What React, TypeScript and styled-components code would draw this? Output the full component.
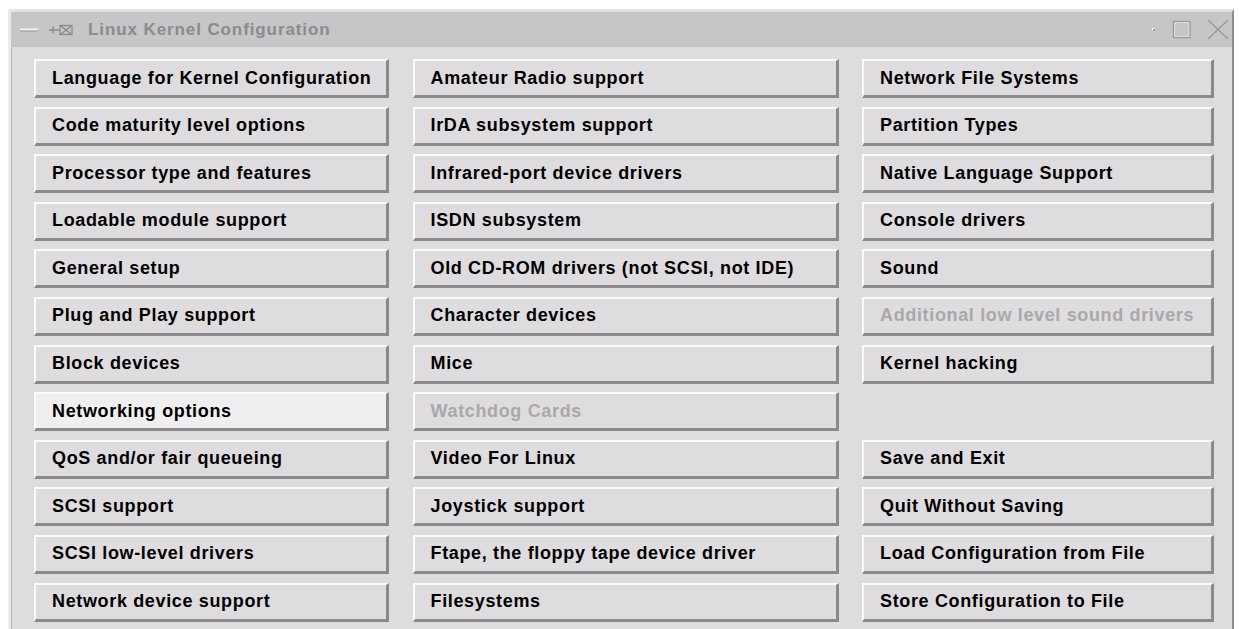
import { createGlobalStyle, styled } from "styled-components";

const GlobalStyle = createGlobalStyle`
    html, body {
        margin: 0;
        padding: 0;
        background: #ffffff;
        overflow: hidden;
    }
    body {
        font-family: "Liberation Sans", Arial, Helvetica, sans-serif;
    }
`;

const Page = styled.div`
    padding: 9px 0 0 8px;
    width: 1239px;
    height: 629px;
    box-sizing: border-box;
`;

const Window = styled.div`
    display: flex;
    flex-direction: column;
    width: 1226px;
    height: 640px;
    border-left: 3px solid #ebebed;
    border-top: 3px solid #e4e4e6;
    border-right: 2px solid #8e8e90;
    box-shadow: inset 1px 0 0 #b4b4b6;
    box-sizing: border-box;
    background: #dfdcdf;
`;

const TitleBar = styled.div`
    display: flex;
    align-items: center;
    height: 35px;
    padding: 0 2px 0 8px;
    background: #c6c5c8;
    color: #8a8a8c;
`;

const Title = styled.span`
    margin-left: 13px;
    font-size: 17px;
    font-weight: bold;
    letter-spacing: 0.9px;
    color: #8b8b8d;
`;

const Spacer = styled.div`
    flex: 1;
`;

const WinButtons = styled.div`
    display: flex;
    align-items: center;
    gap: 14px;

    svg:first-child {
        margin-right: 1px;
    }
`;

const Body = styled.div`
    display: grid;
    grid-template-columns: 355px 426px 352px;
    grid-template-rows: repeat(12, 39px);
    grid-auto-flow: column;
    column-gap: 23.5px;
    row-gap: 8.6px;
    padding: 12px 0 0 23px;
`;

const MenuButton = styled.div<{ $disabled?: boolean; $active?: boolean }>`
    display: flex;
    align-items: center;
    padding-left: 16px;
    box-sizing: border-box;
    border-style: solid;
    border-width: 2px 3px 3px 2px;
    border-color: #fbfbfb #8a898b #8a898b #fbfbfb;
    background: ${(p) => (p.$active ? "#f0efef" : "#dfdcdf")};
    color: ${(p) => (p.$disabled ? "#a9a8aa" : "#000000")};
    font-size: 18px;
    font-weight: bold;
    letter-spacing: 0.65px;
    white-space: nowrap;
`;

const Empty = styled.div``;

interface Item {
    label: string;
    disabled?: boolean;
    active?: boolean;
    empty?: boolean;
}

const items: Item[] = [
    { label: "Language for Kernel Configuration" },
    { label: "Code maturity level options" },
    { label: "Processor type and features" },
    { label: "Loadable module support" },
    { label: "General setup" },
    { label: "Plug and Play support" },
    { label: "Block devices" },
    { label: "Networking options", active: true },
    { label: "QoS and/or fair queueing" },
    { label: "SCSI support" },
    { label: "SCSI low-level drivers" },
    { label: "Network device support" },

    { label: "Amateur Radio support" },
    { label: "IrDA subsystem support" },
    { label: "Infrared-port device drivers" },
    { label: "ISDN subsystem" },
    { label: "Old CD-ROM drivers (not SCSI, not IDE)" },
    { label: "Character devices" },
    { label: "Mice" },
    { label: "Watchdog Cards", disabled: true },
    { label: "Video For Linux" },
    { label: "Joystick support" },
    { label: "Ftape, the floppy tape device driver" },
    { label: "Filesystems" },

    { label: "Network File Systems" },
    { label: "Partition Types" },
    { label: "Native Language Support" },
    { label: "Console drivers" },
    { label: "Sound" },
    { label: "Additional low level sound drivers", disabled: true },
    { label: "Kernel hacking" },
    { label: "", empty: true },
    { label: "Save and Exit" },
    { label: "Quit Without Saving" },
    { label: "Load Configuration from File" },
    { label: "Store Configuration to File" },
];

// window menu dash + pin glyphs on the left of the title
const TitleIcons = () => (
    <svg width="56" height="16" viewBox="0 0 56 16">
        <line x1="1" y1="7.5" x2="19" y2="7.5" stroke="#f4f4f4" strokeWidth="2" />
        <line x1="1" y1="9" x2="19" y2="9" stroke="#9a9a9c" strokeWidth="1" />
        <line x1="30" y1="8" x2="40" y2="8" stroke="#8a8a8c" strokeWidth="1.5" />
        <line x1="34" y1="4.5" x2="34" y2="11.5" stroke="#8a8a8c" strokeWidth="1.5" />
        <rect x="41" y="3.5" width="12" height="9" fill="none" stroke="#8a8a8c" strokeWidth="1.3" />
        <path d="M42 4 L47 8 L42 12 M52 4 L47 8 L52 12" fill="none" stroke="#8a8a8c" strokeWidth="1.3" />
    </svg>
);

const WindowControls = () => (
    <WinButtons>
        <svg width="6" height="20" viewBox="0 0 6 20">
            <rect x="1" y="8" width="3" height="3" fill="#f2f2f2" />
            <rect x="2" y="9" width="2" height="2" fill="#9a9a9c" />
        </svg>
        <svg width="20" height="20" viewBox="0 0 20 20">
            <rect x="1.5" y="1.5" width="16.5" height="16" fill="none" stroke="#98989a" strokeWidth="1.4" />
            <rect x="2.6" y="2.6" width="14.3" height="13.8" fill="none" stroke="#e6e6e8" strokeWidth="0.8" />
        </svg>
        <svg width="24" height="24" viewBox="0 0 24 24">
            <path d="M2 2 L22 21 M22 2 L2 21" stroke="#9a9a9c" strokeWidth="1.4" fill="none" />
        </svg>
    </WinButtons>
);

const App = () => {
    return (
        <Page>
            <GlobalStyle />
            <Window>
                <TitleBar>
                    <TitleIcons />
                    <Title>Linux Kernel Configuration</Title>
                    <Spacer />
                    <WindowControls />
                </TitleBar>
                <Body>
                    {items.map((it, i) =>
                        it.empty ? (
                            <Empty key={i} />
                        ) : (
                            <MenuButton key={i} $disabled={it.disabled} $active={it.active}>
                                {it.label}
                            </MenuButton>
                        )
                    )}
                </Body>
            </Window>
        </Page>
    );
};

export default App;
